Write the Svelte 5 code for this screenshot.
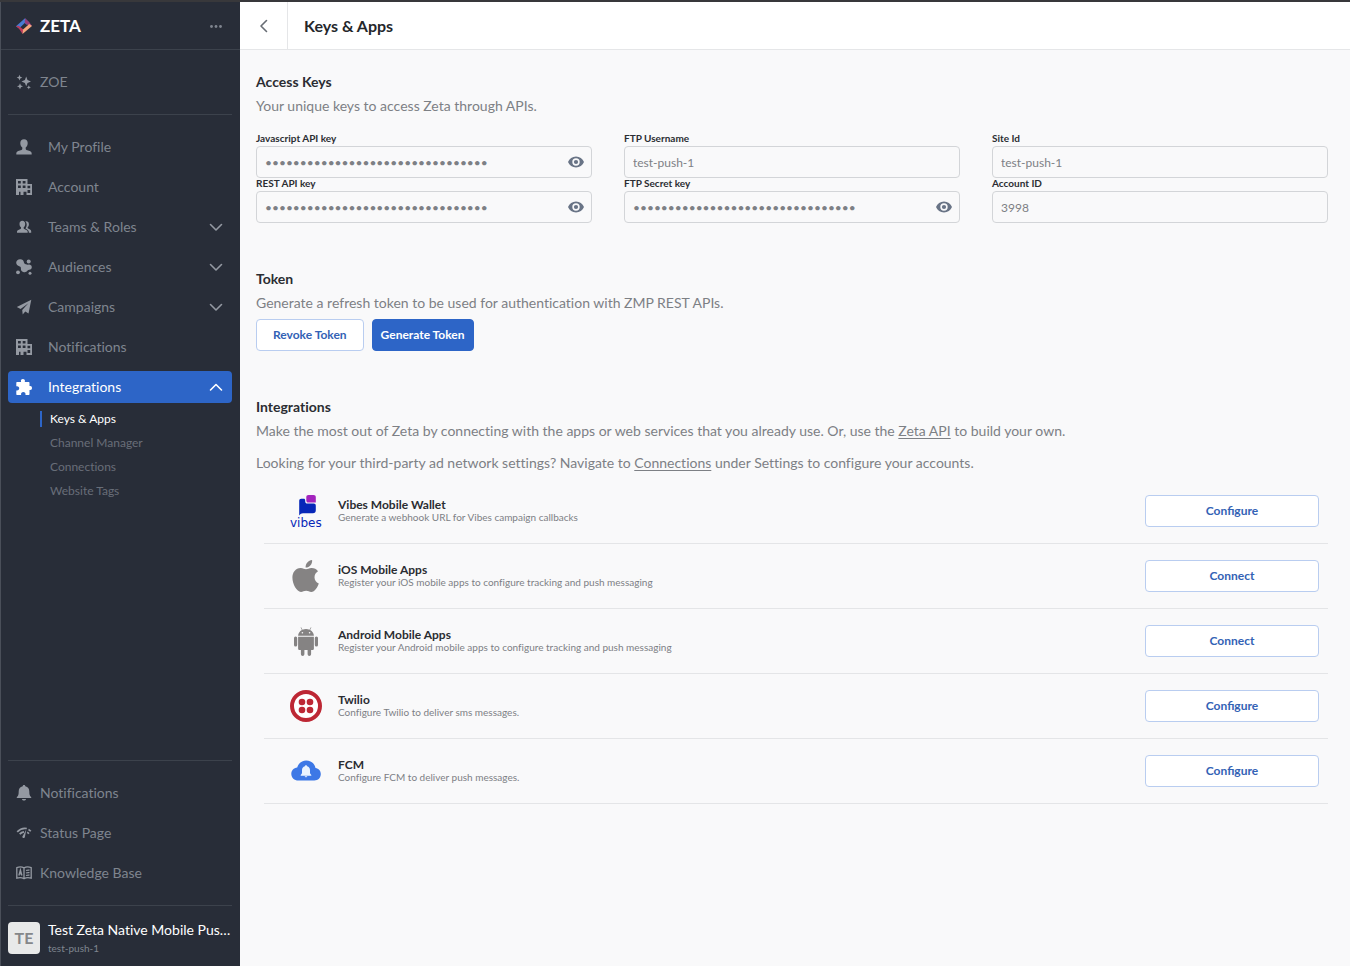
<script>
  const menu = [
    { label: 'My Profile', icon: 'user' },
    { label: 'Account', icon: 'building' },
    { label: 'Teams & Roles', icon: 'team', expandable: true },
    { label: 'Audiences', icon: 'audience', expandable: true },
    { label: 'Campaigns', icon: 'send', expandable: true },
    { label: 'Notifications', icon: 'building' },
    {
      label: 'Integrations',
      icon: 'puzzle',
      expandable: true,
      open: true,
      children: ['Keys & Apps', 'Channel Manager', 'Connections', 'Website Tags']
    }
  ];

  const support = [
    { label: 'Notifications', icon: 'bell' },
    { label: 'Status Page', icon: 'status' },
    { label: 'Knowledge Base', icon: 'book' }
  ];

  const secret = '0'.repeat(32);
  let fields = $state([
    { id: 'js-key', label: 'Javascript API key', value: secret, secret: true, shown: false },
    { id: 'ftp-user', label: 'FTP Username', value: 'test-push-1' },
    { id: 'site-id', label: 'Site Id', value: 'test-push-1' },
    { id: 'rest-key', label: 'REST API key', value: secret, secret: true, shown: false },
    { id: 'ftp-key', label: 'FTP Secret key', value: secret, secret: true, shown: false },
    { id: 'account-id', label: 'Account ID', value: '3998' }
  ]);

  const apps = [
    { name: 'Vibes Mobile Wallet', text: 'Generate a webhook URL for Vibes campaign callbacks', logo: 'vibes', action: 'Configure' },
    { name: 'iOS Mobile Apps', text: 'Register your iOS mobile apps to configure tracking and push messaging', logo: 'apple', action: 'Connect' },
    { name: 'Android Mobile Apps', text: 'Register your Android mobile apps to configure tracking and push messaging', logo: 'android', action: 'Connect' },
    { name: 'Twilio', text: 'Configure Twilio to deliver sms messages.', logo: 'twilio', action: 'Configure' },
    { name: 'FCM', text: 'Configure FCM to deliver push messages.', logo: 'fcm', action: 'Configure' }
  ];
</script>

{#snippet icon(name)}
  <svg class="icon" viewBox="0 0 16 16" fill="currentColor" aria-hidden="true">
    {#if name === 'user'}
      <path d="M8 0.2c2.3 0 3.7 1.6 3.7 3.9 0 1.9-.8 3.6-2 4.5v1.3c0 .5.3.8.8 1l3.3 1.2c1.2.5 1.9 1.4 1.9 2.6v.8H.3v-.8c0-1.2.7-2.1 1.9-2.6l3.3-1.2c.5-.2.8-.5.8-1V8.600c-1.200-.9-2-2.600-2-4.500C4.300 1.800 5.700.2 8 .2z" />
    {:else if name === 'building'}
      <path fill-rule="evenodd" d="M0 0h11.500v5H16v11h-5.500v-3.200H7.500V16H4.500v-3.200H3V16H0zM2 2v2.500h2.800V2zM6.700 2v2.500h2.800V2zM2 6.400v2.700h2.800V6.400zM6.700 6.400v2.700h2.800V6.400zM11.500 6.800v2.400h2.700V6.800zM11.500 11v2.900h2.700V11z" />
    {:else if name === 'team'}
      <path d="M6.300 1.800c1.900 0 2.900 1.300 2.900 3.100 0 1.500-.6 2.700-1.500 3.400v1c0 .4.2.6.6.8l2 .8c.9.4 1.400 1.100 1.400 2v.9H1v-.9c0-.9.5-1.600 1.400-2l2-.8c.4-.2.6-.4.6-.8v-1c-1-.7-1.500-1.900-1.500-3.400 0-1.800 1-3.100 2.800-3.100z" />
      <path d="M9.300 2.300c2.100-.5 3.600.7 3.600 2.900 0 1.300-.5 2.300-1.200 2.900v1.100l2.300 1.300c.8.400 1.200 1.100 1.200 1.900v1.400h-2.300c0-1.800-.8-2.900-2.700-3.800-.6-.3-.7-.8-.3-1.300 1.100-1.700 1.300-4.600-.6-6.400z" />
    {:else if name === 'audience'}
      <path d="M4 .300c2.100-.2 3.600 1.100 3.900 3 .2 1.100.8 1.700 1.900 2 .9.300 1.600.6 2.400.4 1.800-.4 3.400.6 3.600 2.200.1 1.500-1 2.800-2.600 2.800-.7 0-1.200.4-1.600.9-1 1.300-2.700 1.900-4.300 1.300-1.700-.6-2.500-1.800-2.400-3.500.1-.9-.3-1.400-1.100-1.800C1.500 6.700.1 5.500.200 3.600.300 1.900 1.900.500 4 .300z" />
      <circle cx="12.700" cy="2.500" r="2" /><circle cx="2" cy="13.300" r="1.900" /><circle cx="14" cy="14.300" r="1.500" />
    {:else if name === 'send'}
      <path d="M15.300.8 12.500 14.400 9.300 12.600 6.700 15.400 6.200 11 12.400 4.300 4.600 10.100.8 8z" />
    {:else if name === 'puzzle'}
      <path d="M5.100 3.100C4.400.9 5.500.1 6.900.1s2.500.8 1.900 3h3.700c.7 0 1 .400 1 1v3c1.700-.4 2.500.5 2.500 1.900s-.8 2.300-2.500 1.900V14.900c0 .7-.4 1.100-1 1.100H9.500c.3-2-.8-2.900-2.200-2.900S4.800 14 5.100 16H1.300c-.7 0-1-.4-1-1v-3.500c2.200.300 2.900-.9 2.900-2.200S2.500 6.900.3 7.200V4.100c0-.6.3-1 1-1z" />
    {:else if name === 'bell'}
      <path d="M8 0c.8 0 1.200.5 1.300 1.200 2.600.6 4 2.600 4 5.200 0 3 .4 4.500 1.900 5.700v.9H.8v-.9c1.500-1.200 1.900-2.700 1.900-5.700 0-2.600 1.400-4.600 4-5.200C6.800.5 7.200 0 8 0zM5.900 14h4.200c-.3 1.100-1.100 1.600-2.100 1.600S6.200 15.100 5.900 14z" />
    {:else if name === 'status'}
      <path d="M10.300 4.400 8.900 12c-.3 1.600-2.900 1.400-2.500-.4z" />
      <path d="M1.200 6.900C4.200 3.700 7.400 2.800 10.800 3.500M3.700 9.100C4.900 7.700 6.300 7 8 6.800M12.500 4.400c.9.500 1.600 1.100 2.300 1.900M11.200 7.300c.6.300 1.200.8 1.700 1.400" fill="none" stroke="currentColor" stroke-width="1.700" />
    {:else if name === 'book'}
      <path d="M.8 2.600C3.400 1.600 5.900 1.600 8 2.900c2.100-1.300 4.600-1.300 7.200-.3v10.600c-2.600-.8-5-.8-7.200.5-2.200-1.300-4.600-1.300-7.200-.5zM8 3v10.500M10 5.500c1.200-.5 2.300-.6 3.500-.3M10 8c1.200-.5 2.300-.6 3.500-.3M10 10.500c1.200-.5 2.300-.6 3.500-.3M2.900 10.500 4.400 5l1.500 5.500M3.400 8.800h2" fill="none" stroke="currentColor" stroke-width="1.300" />
    {:else if name === 'sparkles'}
      <path d="M10.200 2.400 11.500 6 15 7.500 11.500 9 10.200 12.300 8.900 9 5.500 7.500 8.900 6zM3.500.8l.8 2 2 .8-2 .8-.8 2-.8-2-2-.8 2-.8zM4 9.300l.9 2.100 2.100.9-2.100.9L4 15.300l-.9-2.100L1 12.300l2.100-.9zM12.800 11.200l.6 1.500 1.500.6-1.500.6-.6 1.500-.6-1.500-1.500-.6 1.500-.6z" />
    {:else if name === 'eye'}
      <path fill-rule="evenodd" d="M8 2.500c3.700 0 6.600 2.200 8 5.500-1.400 3.300-4.300 5.500-8 5.500S1.400 11.300 0 8c1.400-3.300 4.300-5.500 8-5.500zM8 4.300a3.700 3.700 0 1 0 0 7.400 3.700 3.700 0 0 0 0-7.400zM8 5.900a2.100 2.100 0 1 1 0 4.200 2.100 2.100 0 0 1 0-4.200z" />
    {:else if name === 'down' || name === 'up' || name === 'left'}
      <path d={name === 'down' ? 'M2.500 5.500 8 11 13.500 5.500' : name === 'up' ? 'M2.500 11 8 5.500 13.500 11' : 'M10.500 2.500 5 8 10.500 13.500'} fill="none" stroke="currentColor" stroke-width="1.600" stroke-linecap="round" stroke-linejoin="round" />
    {:else if name === 'dots'}
      <circle cx="3.500" cy="8.500" r="1.400" /><circle cx="8" cy="8.500" r="1.400" /><circle cx="12.500" cy="8.500" r="1.400" />
    {/if}
  </svg>
{/snippet}

{#snippet logo(name)}
  <svg class="logo" viewBox="0 0 32 32" aria-hidden="true">
    {#if name === 'vibes'}
      <path fill="#a324bd" d="M18.500 0h5c1.500 0 2.300.8 2.300 2.200v5.300h-7.300c-1.500 0-2.200-.8-2.200-2.300v-3c0-1.400.7-2.200 2.200-2.200z" />
      <path fill="#0727b8" d="M9.200 20.500V5.800c0-1.300.8-2 2-2h2.300c1.200 0 1.700.6 1.700 1.700v.7c0 1.700.8 2.400 2.300 2.400h6.200c1.300 0 2.100.8 2.100 2.100v4.500c0 2-1 3-2.900 3H13c-1.700 0-2.600.7-3.800 2.300z" />
      <text x="0" y="32" fill="#0727b8" class="wordmark">vibes</text>
    {:else if name === 'apple'}
      <path fill="#858383" d="M16 9.300c-1.400 0-3.300-1.400-5.400-1.300C5.500 8.200 2.400 12.300 2.400 17.600c0 6.700 4.400 14.400 8.600 14.400 1.900 0 2.900-1.200 5.200-1.200 2.200 0 3 1.200 5.100 1.200 3.300 0 6.500-5.300 7.500-8.600-2.700-1.100-4.300-3.400-4.300-6.200 0-2.600 1.300-4.600 3.500-6-1.500-2.100-3.800-3.200-6.300-3.200-2.500-.1-4.200 1.300-5.700 1.300zM15.600 7.600C15.400 3.700 18.400.500 22.100 0c.5 4-2.600 7.700-6.500 7.600z" />
    {:else if name === 'android'}
      <g fill="#858383">
        <path fill-rule="evenodd" d="M8.100 10.800c.1-2.500 1.500-4.600 3.800-5.800L10.600 2.500l.5-.3 1.400 2.500c2.200-.9 4.800-.9 7 0l1.400-2.500.5.300L20.100 5c2.300 1.200 3.700 3.300 3.800 5.800zM12.400 7a.8.8 0 1 0 0 1.600.8.8 0 0 0 0-1.600zm7.200 0a.8.8 0 1 0 0 1.600.8.8 0 0 0 0-1.600z" />
        <path d="M8.100 11.700h15.800v11.700c0 1-.7 1.700-1.700 1.700h-1.100v3.900c0 2.500-3.500 2.500-3.500 0v-3.900h-3.200v3.900c0 2.500-3.500 2.500-3.500 0v-3.900H9.800c-1 0-1.700-.7-1.700-1.700z" />
        <rect x="4" y="11.500" width="3.200" height="10" rx="1.600" /><rect x="24.800" y="11.500" width="3.200" height="10" rx="1.600" />
      </g>
    {:else if name === 'twilio'}
      <circle cx="16" cy="16" r="14" fill="#fff" stroke="#bd2734" stroke-width="4" />
      <g fill="#bd2734"><circle cx="12" cy="12" r="3.300" /><circle cx="20" cy="12" r="3.300" /><circle cx="12" cy="20" r="3.300" /><circle cx="20" cy="20" r="3.300" /></g>
    {:else if name === 'fcm'}
      <path fill="#3d78e6" d="M8.300 25.500C4.400 25.500 1.300 22.600 1.300 18.900c0-3.500 2.500-6.100 5.900-6.500C8.600 8.200 12 5.500 16.200 5.500c4.700 0 8.400 3 9.300 7.400 3.200.3 5.300 2.900 5.300 6.100 0 3.700-2.700 6.500-6.500 6.500z" />
      <path fill="#eaf3ff" d="M16 10.200c.7 0 1.100.4 1.100 1.100 1.900.5 2.900 2 2.900 4v3l1.300 1.600v.8H10.700v-.8l1.300-1.600v-3c0-2 1-3.500 2.900-4 0-.7.4-1.100 1.100-1.100zM14.700 21.200h2.600c-.2.800-.7 1.100-1.300 1.100s-1.100-.3-1.300-1.100z" />
    {/if}
  </svg>
{/snippet}

<div class="page">
  <aside>
    <header class="brand">
      <svg class="icon" viewBox="0 0 16 16" aria-hidden="true">
        <path fill="#477bd2" d="M9 .2 0 8.200l3 2.200 5.800-5.500 2 1.900 2.500-2.400z" />
        <path fill="#963d79" d="M9 .2 13.500 4.500 16 8l-2.600.1L8.800 4.900z" />
        <path fill="#bb3b5c" d="M0 8.200 2.600 7.800 7.400 11.600 6.500 16 2.900 10.500z" />
        <path fill="#f6a77d" d="M16 8 6.500 16 7.100 11.600 13.200 6z" />
      </svg>
      <strong>ZETA</strong>
      <button class="bare" aria-label="More">{@render icon('dots')}</button>
    </header>

    <nav class="zoe"><a class="item compact" href="#zoe">{@render icon('sparkles')}<span>ZOE</span></a></nav>

    <nav class="menu">
      {#each menu as entry}
        {#if entry.expandable}
          <button class="item" class:active={entry.open} aria-expanded={!!entry.open}>
            {@render icon(entry.icon)}<span>{entry.label}</span>{@render icon(entry.open ? 'up' : 'down')}
          </button>
        {:else}
          <a class="item" href="#menu">{@render icon(entry.icon)}<span>{entry.label}</span></a>
        {/if}
        {#if entry.children}
          <ul>
            {#each entry.children as child, i}
              <li><a href="#sub" class:current={i === 0}>{child}</a></li>
            {/each}
          </ul>
        {/if}
      {/each}
    </nav>

    <nav class="support">
      {#each support as entry}
        <a class="item compact" href="#support">{@render icon(entry.icon)}<span>{entry.label}</span></a>
      {/each}
    </nav>

    <div class="account">
      <div class="avatar">TE</div>
      <div class="who">
        <div class="name">Test Zeta Native Mobile Pus…</div>
        <div class="slug">test-push-1</div>
      </div>
    </div>
  </aside>

  <main>
    <header class="topbar">
      <button class="back" aria-label="Back">{@render icon('left')}</button>
      <h1>Keys &amp; Apps</h1>
    </header>

    <div class="content">
      <section>
        <h2>Access Keys</h2>
        <p>Your unique keys to access Zeta through APIs.</p>
        <div class="fields">
          {#each fields as field}
            <div class="field">
              <label for={field.id}>{field.label}</label>
              <div class="box">
                <input id={field.id} type={field.secret && !field.shown ? 'password' : 'text'} value={field.value} readonly />
                {#if field.secret}
                  <button class="bare eye" aria-label="Show key" onclick={() => (field.shown = !field.shown)}>{@render icon('eye')}</button>
                {/if}
              </div>
            </div>
          {/each}
        </div>
      </section>

      <section>
        <h2>Token</h2>
        <p>Generate a refresh token to be used for authentication with ZMP REST APIs.</p>
        <div class="actions">
          <button class="btn revoke">Revoke Token</button>
          <button class="btn primary">Generate Token</button>
        </div>
      </section>

      <section>
        <h2>Integrations</h2>
        <p>Make the most out of Zeta by connecting with the apps or web services that you already use. Or, use the <a href="#api">Zeta API</a> to build your own.</p>
        <p class="second">Looking for your third-party ad network settings? Navigate to <a href="#connections">Connections</a> under Settings to configure your accounts.</p>
        <ul class="apps">
          {#each apps as app}
            <li>
              {@render logo(app.logo)}
              <div class="info">
                <h3>{app.name}</h3>
                <div>{app.text}</div>
              </div>
              <button class="btn wide">{app.action}</button>
            </li>
          {/each}
        </ul>
      </section>
    </div>
  </main>
</div>

<style>
  :global(body) { background: #f9f9fa; }
  * { box-sizing: border-box; }
  h1, h2, h3, p, ul { margin: 0; padding: 0; }
  ul { list-style: none; }
  button, input { font-family: inherit; }
  button { cursor: pointer; line-height: 24px; }

  .page {
    display: flex;
    min-height: 100vh;
    border-top: 2px solid #38383b;
    font-family: Lato, sans-serif;
    font-size: 14px;
    font-variant-ligatures: no-common-ligatures;
    line-height: 24px;
    color: #7d8085;
  }
  .icon { display: block; flex: none; width: 16px; height: 16px; }
  .bare { padding: 0; border: 0; background: none; color: inherit; }

  aside {
    display: flex;
    flex-direction: column;
    flex: none;
    width: 240px;
    background: #282d38;
    border-left: 1px solid #4a4f59;
    color: #7f858f;
  }
  .brand {
    display: flex;
    align-items: center;
    gap: 8px;
    height: 48px;
    padding: 0 16px 0 15px;
    border-bottom: 1px solid #3c424c;
  }
  .brand strong { flex: 1; color: #fff; font-size: 17px; font-weight: 700; }

  .zoe { margin: 0 8px 0 7px; padding: 16px 0; border-bottom: 1px solid #3c424c; }
  .menu { padding: 16px 8px 16px 7px; }
  .item {
    display: flex;
    align-items: center;
    gap: 16px;
    width: 100%;
    height: 32px;
    margin-bottom: 8px;
    padding: 0 8px;
    border: 0;
    border-radius: 4px;
    background: none;
    color: inherit;
    font-size: 14px;
    font-variant-ligatures: inherit;
    text-align: left;
    text-decoration: none;
  }
  .item span { flex: 1; }
  .item .icon { color: #9499a2; }
  .compact { gap: 8px; }
  .zoe .item { margin: 0; }
  .item.active { margin-bottom: 4px; background: #2d65c7; color: #fff; }
  .item.active .icon { color: #fff; }

  .menu ul { padding-left: 32px; font-size: 12px; }
  .menu li { display: flex; align-items: center; height: 24px; }
  .menu li a {
    padding-left: 8px;
    border-left: 2px solid transparent;
    color: #686e78;
    line-height: 16px;
    text-decoration: none;
  }
  .menu li a.current { border-color: #2d65c7; color: #fff; }

  .support { margin: auto 8px 0 7px; padding: 16px 0 8px; border-top: 1px solid #3c424c; }
  .account {
    display: flex;
    align-items: center;
    gap: 8px;
    margin: 0 8px 0 7px;
    padding: 14px 0 10px;
    border-top: 1px solid #3c424c;
  }
  .avatar {
    flex: none;
    width: 32px;
    border-radius: 4px;
    background: #e8e9e9;
    color: #858789;
    font-size: 16px;
    font-weight: 700;
    line-height: 32px;
    text-align: center;
  }
  .who { min-width: 0; }
  .name {
    color: #fff;
    line-height: 20px;
    white-space: nowrap;
  }
  .slug { font-size: 10px; line-height: 16px; }

  main { flex: 1; min-width: 0; background: #f9f9fa; }
  .topbar {
    display: flex;
    align-items: center;
    height: 48px;
    border-bottom: 1px solid #e5e6e8;
    background: #fff;
  }
  .back {
    display: flex;
    align-items: center;
    justify-content: center;
    width: 48px;
    height: 47px;
    padding: 0;
    border: 0;
    border-right: 1px solid #e5e6e8;
    background: none;
    color: #686d74;
  }
  h1 { padding-left: 16px; color: #25272b; font-size: 16px; font-weight: 700; }

  .content { padding: 20px 22px 20px 16px; }
  section { margin-bottom: 44px; }
  h2 { color: #2b2d32; font-size: 14px; font-weight: 700; line-height: 24px; }
  p a { color: inherit; text-underline-offset: 2px; }

  .fields {
    display: grid;
    grid-template-columns: repeat(3, 1fr);
    column-gap: 32px;
    margin-top: 15px;
  }
  label {
    display: block;
    margin-bottom: 2px;
    color: #2b2d32;
    font-size: 10px;
    font-weight: 700;
    line-height: 11px;
  }
  .box {
    display: flex;
    align-items: center;
    height: 32px;
    padding: 0 7px 0 8px;
    border: 1px solid #d3d5d8;
    border-radius: 4px;
  }
  input {
    flex: 1;
    min-width: 0;
    padding: 0;
    border: 0;
    outline: 0;
    background: none;
    color: #7d8085;
    font-size: 12px;
  }
  .eye { color: #697486; }

  .actions { display: flex; gap: 8px; margin-top: 4px; }
  .btn {
    height: 32px;
    padding: 0 8px;
    border: 1px solid #b9cdf0;
    border-radius: 4px;
    background: #fff;
    color: #3362b5;
    font-size: 12px;
    font-weight: 700;
  }
  .btn.revoke { padding: 0 16px; }
  .btn.primary { border-color: #2d65c7; background: #2d65c7; color: #fff; }
  .btn.wide { width: 174px; }

  .second { margin-top: 8px; }
  .apps { margin: 4px 0 0 8px; }
  .apps li {
    display: flex;
    align-items: center;
    gap: 16px;
    height: 65px;
    padding: 0 9px 0 26px;
    border-bottom: 1px solid #e4e5e7;
  }
  .logo { flex: none; width: 32px; height: 32px; overflow: visible; }
  .wordmark { font-family: 'DejaVu Sans', sans-serif; font-size: 12px; }
  .info { flex: 1; font-size: 10px; line-height: 13px; }
  h3 { color: #2b2d32; font-size: 12px; font-weight: 700; line-height: 13px; }
</style>
